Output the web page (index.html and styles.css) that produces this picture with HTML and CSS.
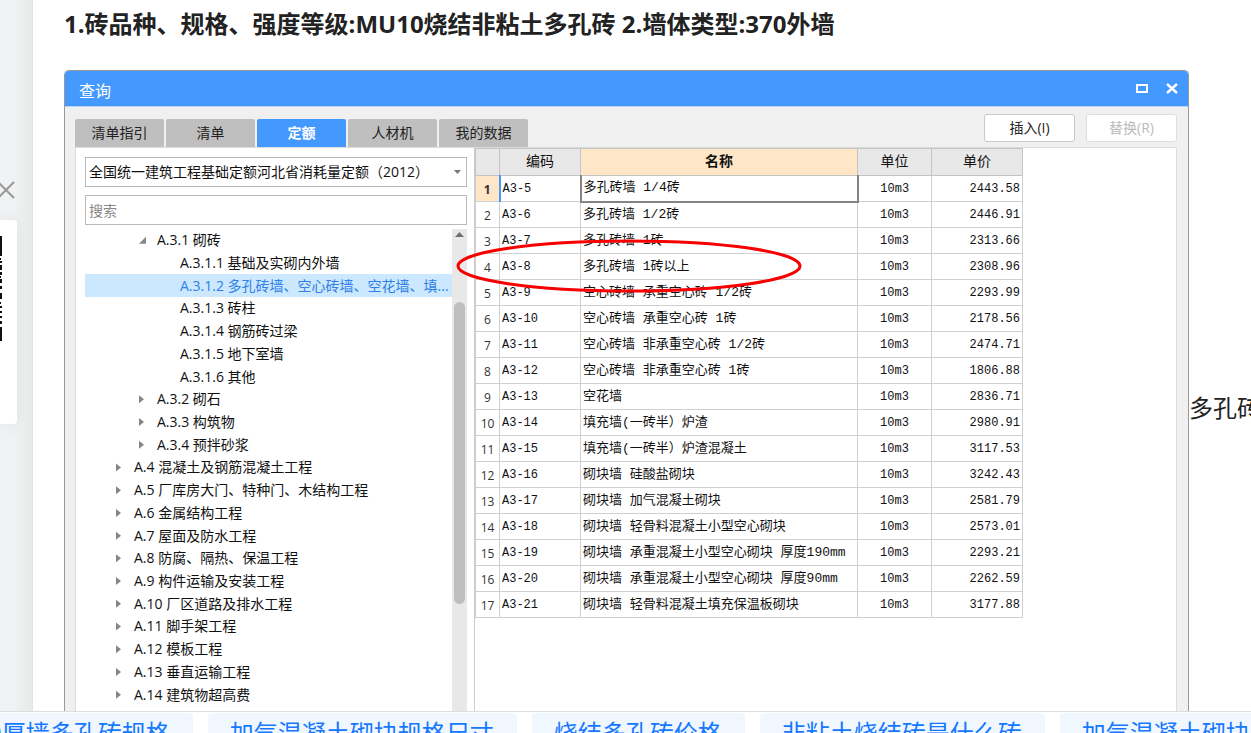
FILE: index.html
```html
<!DOCTYPE html>
<html lang="zh-CN">
<head>
<meta charset="utf-8">
<title>多孔砖墙定额查询</title>
<link rel="stylesheet" href="styles.css">
</head>
<body>
<div class="page">
  <aside class="rail">
    <button class="rail-close" aria-label="关闭"><svg width="18" height="18" viewBox="0 0 18 18"><path d="M1 1 17 17M17 1 1 17" fill="none" stroke="#999" stroke-width="2"/></svg></button>
    <div class="qr-card"><svg width="3" height="106" viewBox="0 0 3 106"><path d="M0 0h2v20H0zM0 22h1v2H0zM0 25h2v2H0zM0 29h2v5H0zM0 36h2v3H0zM0 40h1v2H0zM0 43h2v4H0zM0 50h2v3H0zM0 57h2v6H0zM0 66h1v2H0zM0 70h2v2H0zM0 75h2v2H0zM0 80h2v2H0zM0 85h2v3H0zM0 91h2v14H0z" fill="#111"/></svg></div>
  </aside>
  <main class="article">
    <h1 class="headline">1.砖品种、规格、强度等级:MU10烧结非粘土多孔砖 2.墙体类型:370外墙</h1>
    <div class="figure-row">
      <section class="window">
        <header class="titlebar">
          <span class="title">查询</span>
          <button class="win-btn" aria-label="最大化"><svg width="12" height="12" viewBox="0 0 12 12"><path d="M1 2h10v7H1z" fill="none" stroke="#fff" stroke-width="2"/></svg></button>
          <button class="win-btn" aria-label="关闭窗口"><svg width="12" height="12" viewBox="0 0 12 12"><path d="M1 1 11 10M11 1 1 10" fill="none" stroke="#fff" stroke-width="2.400"/></svg></button>
        </header>
        <div class="window-body">
          <div class="toolbar">
            <nav class="tabs">
              <button class="tab">清单指引</button>
              <button class="tab">清单</button>
              <button class="tab active">定额</button>
              <button class="tab">人材机</button>
              <button class="tab">我的数据</button>
            </nav>
            <div class="actions">
              <button class="action">插入(I)</button>
              <button class="action" disabled>替换(R)</button>
            </div>
          </div>
          <div class="panel">
            <div class="sidebar">
              <div class="select-wrap">
                <select class="field library" aria-label="定额库"><option>全国统一建筑工程基础定额河北省消耗量定额（2012）</option></select>
                <svg class="caret" width="7" height="4" viewBox="0 0 7 4"><path d="M0 0h7L3.500 4z" fill="#777"/></svg>
              </div>
              <input class="field search" type="text" placeholder="搜索" aria-label="搜索">
              <div class="tree-area">
                <ul class="tree">
                  <li class="node l2 open">A.3.1 砌砖</li>
                  <li class="node l3">A.3.1.1 基础及实砌内外墙</li>
                  <li class="node l3 selected">A.3.1.2 多孔砖墙、空心砖墙、空花墙、填...</li>
                  <li class="node l3">A.3.1.3 砖柱</li>
                  <li class="node l3">A.3.1.4 钢筋砖过梁</li>
                  <li class="node l3">A.3.1.5 地下室墙</li>
                  <li class="node l3">A.3.1.6 其他</li>
                  <li class="node l2 closed">A.3.2 砌石</li>
                  <li class="node l2 closed">A.3.3 构筑物</li>
                  <li class="node l2 closed">A.3.4 预拌砂浆</li>
                  <li class="node l1 closed">A.4 混凝土及钢筋混凝土工程</li>
                  <li class="node l1 closed">A.5 厂库房大门、特种门、木结构工程</li>
                  <li class="node l1 closed">A.6 金属结构工程</li>
                  <li class="node l1 closed">A.7 屋面及防水工程</li>
                  <li class="node l1 closed">A.8 防腐、隔热、保温工程</li>
                  <li class="node l1 closed">A.9 构件运输及安装工程</li>
                  <li class="node l1 closed">A.10 厂区道路及排水工程</li>
                  <li class="node l1 closed">A.11 脚手架工程</li>
                  <li class="node l1 closed">A.12 模板工程</li>
                  <li class="node l1 closed">A.13 垂直运输工程</li>
                  <li class="node l1 closed">A.14 建筑物超高费</li>
                </ul>
                <div class="scrollbar"><svg width="9" height="5" viewBox="0 0 9 5"><path d="M0 5h9L4.500 0z" fill="#707078"/></svg><div class="thumb"></div></div>
              </div>
            </div>
            <div class="results">
              <table class="grid">
                <colgroup><col class="c-no"><col class="c-code"><col class="c-name"><col class="c-unit"><col class="c-price"></colgroup>
                <thead><tr><th></th><th>编码</th><th class="current">名称</th><th>单位</th><th>单价</th></tr></thead>
                <tbody>
                  <tr class="current-row"><th>1</th><td>A3-5</td><td>多孔砖墙 1/4砖</td><td>10m3</td><td>2443.58</td></tr>
                  <tr><th>2</th><td>A3-6</td><td>多孔砖墙 1/2砖</td><td>10m3</td><td>2446.91</td></tr>
                  <tr><th>3</th><td>A3-7</td><td>多孔砖墙 1砖</td><td>10m3</td><td>2313.66</td></tr>
                  <tr><th>4</th><td>A3-8</td><td>多孔砖墙 1砖以上</td><td>10m3</td><td>2308.96</td></tr>
                  <tr><th>5</th><td>A3-9</td><td>空心砖墙 承重空心砖 1/2砖</td><td>10m3</td><td>2293.99</td></tr>
                  <tr><th>6</th><td>A3-10</td><td>空心砖墙 承重空心砖 1砖</td><td>10m3</td><td>2178.56</td></tr>
                  <tr><th>7</th><td>A3-11</td><td>空心砖墙 非承重空心砖 1/2砖</td><td>10m3</td><td>2474.71</td></tr>
                  <tr><th>8</th><td>A3-12</td><td>空心砖墙 非承重空心砖 1砖</td><td>10m3</td><td>1806.88</td></tr>
                  <tr><th>9</th><td>A3-13</td><td>空花墙</td><td>10m3</td><td>2836.71</td></tr>
                  <tr><th>10</th><td>A3-14</td><td>填充墙(一砖半）炉渣</td><td>10m3</td><td>2980.91</td></tr>
                  <tr><th>11</th><td>A3-15</td><td>填充墙(一砖半）炉渣混凝土</td><td>10m3</td><td>3117.53</td></tr>
                  <tr><th>12</th><td>A3-16</td><td>砌块墙 硅酸盐砌块</td><td>10m3</td><td>3242.43</td></tr>
                  <tr><th>13</th><td>A3-17</td><td>砌块墙 加气混凝土砌块</td><td>10m3</td><td>2581.79</td></tr>
                  <tr><th>14</th><td>A3-18</td><td>砌块墙 轻骨料混凝土小型空心砌块</td><td>10m3</td><td>2573.01</td></tr>
                  <tr><th>15</th><td>A3-19</td><td>砌块墙 承重混凝土小型空心砌块 厚度190mm</td><td>10m3</td><td>2293.21</td></tr>
                  <tr><th>16</th><td>A3-20</td><td>砌块墙 承重混凝土小型空心砌块 厚度90mm</td><td>10m3</td><td>2262.59</td></tr>
                  <tr><th>17</th><td>A3-21</td><td>砌块墙 轻骨料混凝土填充保温板砌块</td><td>10m3</td><td>3177.88</td></tr>
                </tbody>
              </table>
              <svg class="mark" width="346" height="54" viewBox="0 0 346 54"><ellipse cx="173" cy="27" rx="171" ry="25" fill="none" stroke="#f60000" stroke-width="3"/></svg>
            </div>
          </div>
        </div>
      </section>
      <p class="side-text">多孔砖</p>
    </div>
  </main>
</div>
<nav class="related">
  <a class="chip first" href="#">0厚墙多孔砖规格</a>
  <a class="chip" href="#">加气混凝土砌块规格尺寸</a>
  <a class="chip" href="#">烧结多孔砖价格</a>
  <a class="chip" href="#">非粘土烧结砖是什么砖</a>
  <a class="chip" href="#">加气混凝土砌块</a>
</nav>
</body>
</html>
```

FILE: styles.css
```css
* { box-sizing: border-box; }
body {
  margin: 0;
  height: 100vh;
  display: flex;
  flex-direction: column;
  overflow: hidden;
  background: #fff;
  color: #222;
  font: 14px/20px "Open Sans", "Noto Sans CJK SC", sans-serif;
}
button { font: inherit; padding: 0; border: 0; background: none; }
svg { display: block; }

.page { flex: 1; min-height: 0; display: flex; overflow: hidden; }
.rail {
  flex: 0 0 33px;
  padding-top: 181px;
  overflow: hidden;
  background: linear-gradient(to right, #f1f2f4 40%, #e8eaea);
  border-right: 1px solid #e2e4e4;
}
.rail-close { display: block; margin-left: -3px; }
.qr-card {
  width: 17px;
  height: 204px;
  margin-top: 21px;
  padding-top: 16px;
  background: #fff;
  border-radius: 0 4px 4px 0;
  box-shadow: 0 0 16px #dfe1e1;
}

.article { flex: 1; min-width: 0; display: flex; flex-direction: column; padding-left: 31px; }
.headline { margin: 6px 0 28px; font-size: 24px; line-height: 36px; font-weight: 700; white-space: nowrap; }
.figure-row { flex: 1; min-height: 0; display: flex; align-items: stretch; }
.side-text {
  flex: 0 0 62px;
  margin: 0;
  padding-top: 320px;
  font-size: 24px;
  line-height: 36px;
  overflow: hidden;
  white-space: nowrap;
}

.window {
  flex: 1;
  min-width: 0;
  display: flex;
  flex-direction: column;
  border: 1px solid #999;
  border-bottom: 0;
  border-radius: 5px 5px 0 0;
  background: #f0f0f0;
}
.titlebar {
  display: flex;
  align-items: center;
  gap: 18px;
  height: 36px;
  padding: 0 10px 0 14px;
  background: #4499ff;
  border-bottom: 1px solid #b5d4f8;
  border-radius: 4px 4px 0 0;
  color: #fff;
}
.title { flex: 1; font-size: 16px; padding-top: 4px; }
.window-body { flex: 1; min-height: 0; display: flex; flex-direction: column; padding: 7px 11px 0 10px; }
.toolbar { display: flex; justify-content: space-between; align-items: flex-end; height: 33px; }
.tabs { display: flex; gap: 2px; }
.tab { width: 89px; height: 28px; background: #bfbfbf; border-radius: 2px 2px 0 0; color: #222; }
.tab.active { background: #4499ff; color: #fff; font-weight: 700; }
.actions { display: flex; gap: 11px; padding-bottom: 5px; }
.action { width: 91px; height: 28px; background: #fff; border: 1px solid #c8c8c8; border-radius: 3px; color: #222; }
.action:disabled { color: #bbb; border-color: #dedede; }

.panel { flex: 1; min-height: 0; display: flex; background: #fff; border: 1px solid #dcdcdc; border-bottom: 0; }
.sidebar { flex: 0 0 391px; display: flex; flex-direction: column; padding: 9px 0 0 9px; }
.select-wrap { position: relative; width: 382px; margin-bottom: 8px; }
.field {
  width: 382px;
  height: 30px;
  padding: 0 3px;
  font: inherit;
  color: #111;
  background: #fff;
  border: 1px solid #b8b8b8;
  border-radius: 0;
}
.library { display: block; appearance: none; }
.search::placeholder { color: #888; opacity: 1; }
.caret { position: absolute; right: 6px; top: 13px; }
.tree-area { flex: 1; min-height: 0; display: flex; width: 382px; margin-top: 4px; }
.tree {
  flex: 1;
  display: grid;
  grid-auto-rows: 1fr;
  margin: 0;
  padding: 0 0 5px;
  list-style: none;
  color: #111;
}
.node { display: flex; align-items: center; min-height: 0; white-space: nowrap; }
.node::before { content: ""; width: 7px; margin-right: 11px; }
.l1 { padding-left: 31px; }
.l2 { padding-left: 54px; }
.l3 { padding-left: 77px; }
.closed::before { width: 5px; height: 8px; margin-right: 13px; background: #858585; clip-path: polygon(0 0, 100% 50%, 0 100%); }
.open::before { height: 7px; background: #858585; clip-path: polygon(100% 0, 100% 100%, 0 100%); }
.selected { background: #cce8ff; color: #2f80e8; }
.scrollbar { width: 15px; padding: 3px 2px 0; background: #e8e8e8; }
.scrollbar svg { margin-left: 1px; }
.thumb { height: 302px; margin-top: 65px; background: #bfbfbf; border-radius: 6px; }

.results { position: relative; flex: 1; min-width: 0; margin-left: 7px; border-left: 1px solid #ccc; }
.mark { position: absolute; left: -19px; top: 91px; }
.grid { table-layout: fixed; width: 548px; border-collapse: collapse; font: 12px/16px "Liberation Mono", "Noto Sans CJK SC", monospace; color: #111; }
.c-no { width: 24px; }
.c-code { width: 81px; }
.c-name { width: 277px; }
.c-unit { width: 74px; }
.c-price { width: 91px; }
.grid th, .grid td { height: 26px; padding: 0 2px; border: 1px solid #d0d0d0; white-space: nowrap; text-align: center; }
.grid thead th { height: 27px; background: #e8e8e8; border-color: #c4c4c4; font-size: 14px; font-weight: 400; }
.grid thead .current { background: #ffe6c6; font-weight: 700; }
.grid tbody th { padding-top: 2px; font-family: "Open Sans", sans-serif; font-weight: 400; color: #333; }
.grid td:nth-child(2), .grid td:nth-child(3) { text-align: left; }
.grid td:nth-child(3) { font-size: 13px; }
.grid td:last-child { text-align: right; }
.grid .current-row th { background: #ffe6c6; font-weight: 700; border-right: 2px solid #4499ff; }
.grid .current-row td:nth-child(3) { border: 2px solid #858585; border-top: 1px solid #6aa8ee; }

.related { flex: 0 0 22px; display: flex; gap: 15px; padding-top: 1px; overflow: hidden; border-top: 1px solid #ddd; background: #fff; }
.chip {
  flex: none;
  height: 48px;
  padding: 0 23px 0 22px;
  background: #f0f7ff;
  border-radius: 4px;
  color: #1677ff;
  font-size: 24px;
  line-height: 40px;
  text-decoration: none;
}
.first { margin-left: -12px; padding-left: 0; }
```
